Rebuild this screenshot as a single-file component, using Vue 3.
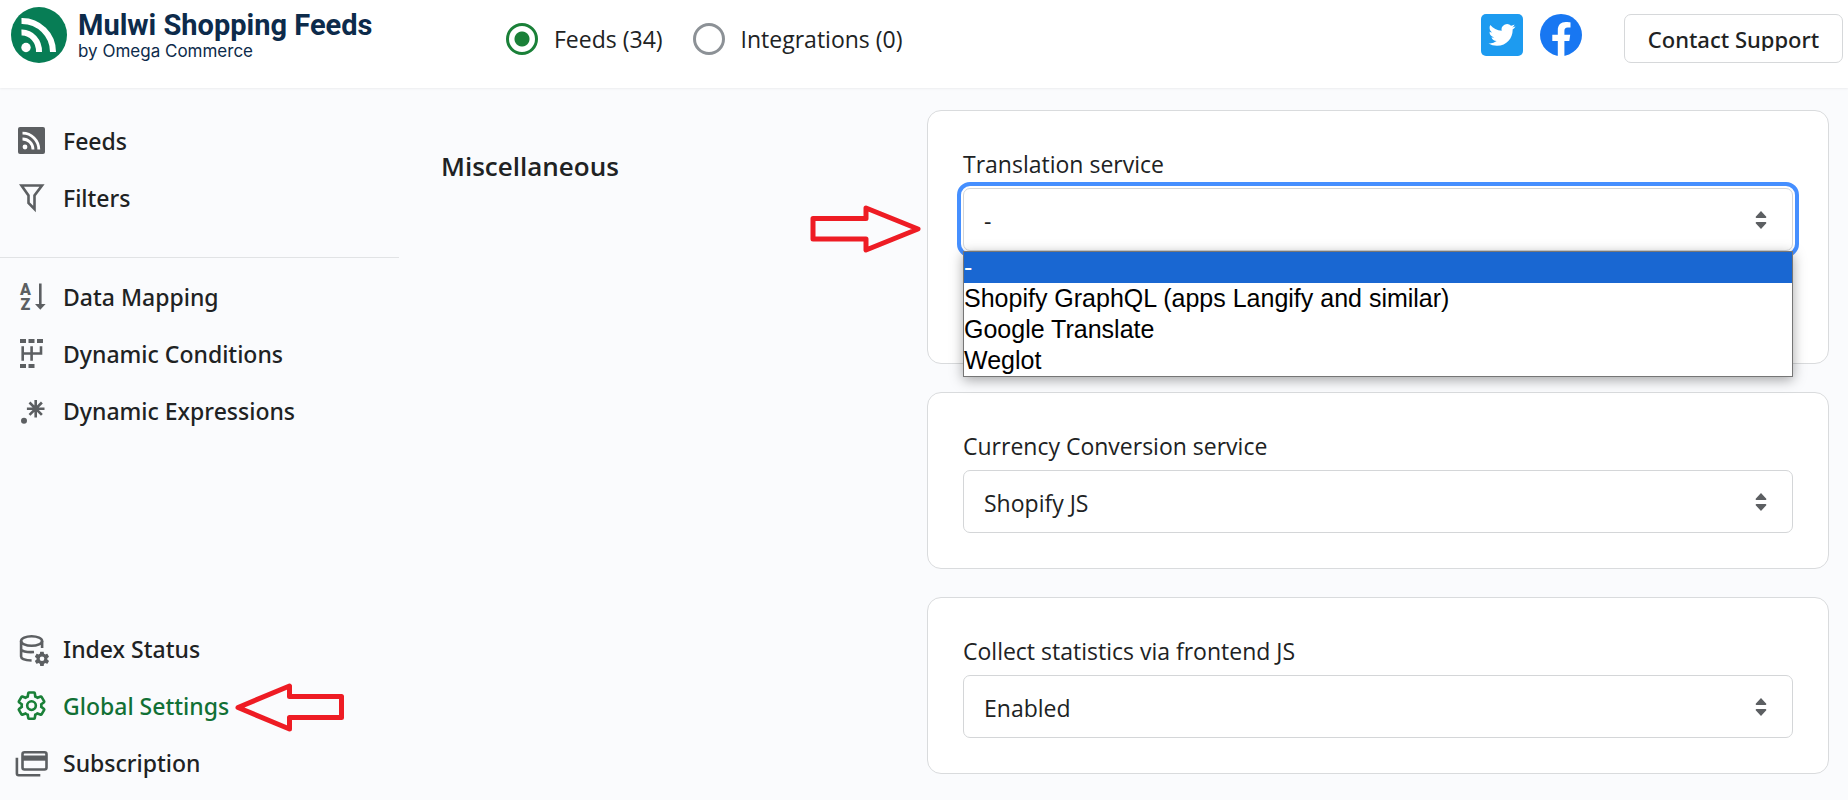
<!--
  App.vue - feed settings page
  Header with the brand and mode switch, sidebar navigation, settings cards
-->
<template>
  <div class="page">
    <!-- ========= header ========= -->
    <header class="header">
      <div class="brand">
        <svg class="brand-logo" viewBox="0 0 56 56" aria-hidden="true">
          <circle cx="28" cy="28" r="28" fill="#077d55" />
          <circle cx="15" cy="40.500" r="4.700" fill="#fff" />
          <path d="M10.500 25.500A17 19 0 0 1 28 45M10.500 14A31 31 0 0 1 42 45" fill="none" stroke="#fff" stroke-width="6" />
        </svg>
        <div class="brand-text">
          <div class="brand-title">Mulwi Shopping Feeds</div>
          <div class="brand-sub">by Omega Commerce</div>
        </div>
      </div>

      <div class="modes">
        <label v-for="m in modes" :key="m.value" class="mode">
          <input v-model="mode" type="radio" name="mode" :value="m.value" />
          <span>{{ m.label }}</span>
        </label>
      </div>

      <div class="actions">
        <a href="#" class="social" aria-label="Twitter">
          <svg viewBox="0 0 42 42">
            <rect width="42" height="42" rx="5" fill="#1d9bf0" />
            <path
              transform="translate(7.500 7.500) scale(1.120)"
              fill="#fff"
              d="M23.950 4.570a10 10 0 0 1-2.820.770 4.960 4.960 0 0 0 2.160-2.720c-.950.550-2 .950-3.130 1.180a4.920 4.920 0 0 0-8.380 4.480C7.690 8.090 4.070 6.130 1.640 3.160a4.820 4.820 0 0 0-.670 2.480c0 1.710.870 3.210 2.190 4.100a4.900 4.900 0 0 1-2.230-.620v.060a4.920 4.920 0 0 0 3.950 4.830 5 5 0 0 1-2.210.080 4.940 4.940 0 0 0 4.600 3.420A9.870 9.870 0 0 1 0 19.540a13.990 13.990 0 0 0 7.560 2.210c9.050 0 14-7.500 14-13.980 0-.210 0-.420-.020-.630a9.940 9.940 0 0 0 2.460-2.550z"
            />
          </svg>
        </a>
        <a href="#" class="social" aria-label="Facebook">
          <svg viewBox="0 0 42 42">
            <circle cx="21" cy="21" r="21" fill="#1877f2" />
            <path d="M17.800 42V27H12.300v-6.200h5.500v-4.600c0-5.300 3.200-8.200 8-8.200 2.300 0 4.700.400 4.700.400v5.200h-2.700c-2.600 0-3.400 1.600-3.400 3.300v3.900h5.800l-.900 6.200h-4.900v15z" fill="#fff" />
          </svg>
        </a>
        <button type="button" class="support"><span>Contact Support</span></button>
      </div>
    </header>

    <div class="layout">
      <!-- ========= sidebar ========= -->
      <nav class="sidebar">
        <div v-for="(group, gi) in navGroups" :key="gi" class="nav-group">
          <a
            v-for="item in group"
            :key="item.icon"
            href="#"
            class="nav-item"
            :class="{ active: item.icon === current }"
            @click.prevent="current = item.icon"
          >
            <svg class="nav-icon" viewBox="0 0 32 32" aria-hidden="true">
              <template v-if="item.icon === 'feeds'">
                <rect x="3" y="2" width="27" height="27" rx="2" fill="currentColor" />
                <circle cx="10" cy="22" r="2.400" fill="#fff" />
                <path d="M7.500 14A10.500 10.500 0 0 1 18 24.500M7.500 8.200A16.300 16.300 0 0 1 23.800 24.500" fill="none" stroke="#fff" stroke-width="2.800" />
              </template>
              <path v-else-if="item.icon === 'filters'" class="line" d="M6.500 3.500H27L19.500 13.500V27L13.500 21V13.500Z" />
              <template v-else-if="item.icon === 'mapping'">
                <text x="10.500" y="14" class="sort-letter">A</text>
                <text x="10.500" y="28.500" class="sort-letter">Z</text>
                <path class="line" d="M25.300 2.500V25" />
                <path d="M20 23H30.600L25.300 28.800Z" fill="currentColor" />
              </template>
              <template v-else-if="item.icon === 'conditions'">
                <path d="M5 1h6v4H5zM13.500 1h6v4h-6zM22 1h6v4h-6zM5 26h6v4H5zM13.500 26h6v4h-6z" fill="currentColor" />
                <path class="line" d="M7.700 8.300V22.700M16.600 8.300V22.700M26 8.300V15.500H7.700" />
              </template>
              <template v-else-if="item.icon === 'expressions'">
                <circle cx="9" cy="25.700" r="3" fill="currentColor" />
                <path class="line" d="M20.700 4.900V22.500M11.900 13.700H29.500M14.500 7.500L26.900 19.900M26.900 7.500L14.500 19.900" />
              </template>
              <template v-else-if="item.icon === 'index'">
                <ellipse class="line" cx="16.600" cy="8" rx="10.500" ry="4.800" />
                <path class="line" d="M6.100 8V23.500C6.100 25.800 10.500 27.300 16.600 27.500M6.100 16C6.100 18 11 19.500 19 19M27.100 8V15" />
                <path :d="gearPath" transform="translate(18.300 17.200) scale(0.720)" fill="currentColor" />
                <circle cx="27" cy="25.800" r="2.300" fill="#fafbfd" />
              </template>
              <g v-else-if="item.icon === 'settings'" transform="translate(0.800 -0.100) scale(1.310)" fill="none" stroke="currentColor" stroke-width="2">
                <path :d="gearPath" />
                <circle cx="12" cy="12" r="3.300" />
              </g>
              <template v-else>
                <rect class="line" x="7.500" y="5.200" width="24" height="17.300" rx="2" />
                <path d="M7.500 8.500h24v5.200h-24z" fill="currentColor" />
                <path class="line" d="M1.900 10.700V26.500Q1.900 28.200 3.600 28.200H25.300" />
              </template>
            </svg>
            <span>{{ item.label }}</span>
            <svg v-if="item.icon === 'settings'" class="pointer pointer-left" viewBox="0 0 114 58" aria-hidden="true">
              <path d="M6 28.500L57.500 7V17.500H109.500V38.500H57.500V50Z" />
            </svg>
          </a>
        </div>
      </nav>

      <!-- ========= settings ========= -->
      <main class="content">
        <h2 class="section-title">Miscellaneous</h2>

        <div class="cards">
          <svg class="pointer pointer-right" viewBox="0 0 116 58" aria-hidden="true">
            <path d="M5 18.500H58V8L110 29L58 50V39H5Z" />
          </svg>

          <section v-for="field in fields" :key="field.id" class="card" :class="{ tall: field.open }">
            <label class="field-label" :for="field.id">{{ field.label }}</label>
            <div class="select-wrap">
              <select :id="field.id" v-model="field.value" class="select" :class="{ focused: field.open }">
                <option v-for="o in field.options" :key="o" :value="o">{{ o }}</option>
              </select>
              <svg class="caret" viewBox="0 0 12 18" aria-hidden="true">
                <path d="M6 0L11.300 5.800Q11.500 7 10.500 7H1.500Q.500 7 .700 5.800ZM6 18L11.300 12.200Q11.500 11 10.500 11H1.500Q.500 11 .700 12.200Z" />
              </svg>
              <ul v-if="field.open" class="options" role="listbox" :aria-label="field.label">
                <li
                  v-for="o in field.options"
                  :key="o"
                  role="option"
                  :aria-selected="o === field.value"
                  @click="pick(field, o)"
                >{{ o }}</li>
              </ul>
            </div>
          </section>
        </div>
      </main>
    </div>
  </div>
</template>

<script setup>
import { ref } from 'vue'

const mode = ref('feeds')
const modes = [
  { value: 'feeds', label: 'Feeds (34)' },
  { value: 'integrations', label: 'Integrations (0)' }
]

const current = ref('settings')
const navGroups = [
  [
    { icon: 'feeds', label: 'Feeds' },
    { icon: 'filters', label: 'Filters' }
  ],
  [
    { icon: 'mapping', label: 'Data Mapping' },
    { icon: 'conditions', label: 'Dynamic Conditions' },
    { icon: 'expressions', label: 'Dynamic Expressions' }
  ],
  [
    { icon: 'index', label: 'Index Status' },
    { icon: 'settings', label: 'Global Settings' },
    { icon: 'subscription', label: 'Subscription' }
  ]
]

const fields = ref([
  {
    id: 'translation',
    label: 'Translation service',
    value: '-',
    options: ['-', 'Shopify GraphQL (apps Langify and similar)', 'Google Translate', 'Weglot'],
    open: true
  },
  { id: 'currency', label: 'Currency Conversion service', value: 'Shopify JS', options: ['Shopify JS'], open: false },
  { id: 'statistics', label: 'Collect statistics via frontend JS', value: 'Enabled', options: ['Enabled'], open: false }
])

function pick(field, option) {
  field.value = option
  field.open = false
}

// gear outline on a 24x24 grid, shared by two icons
const gearPath =
  'M19.430 12.980c.040-.320.070-.640.070-.980 0-.340-.030-.660-.070-.980l2.110-1.650c.190-.150.240-.420.120-.640l-2-3.460c-.090-.160-.260-.250-.440-.250-.060 0-.120.010-.170.030l-2.490 1c-.520-.400-1.080-.730-1.690-.980l-.380-2.650C14.460 2.180 14.250 2 14 2h-4c-.250 0-.460.180-.490.420l-.380 2.650c-.610.250-1.170.590-1.690.980l-2.490-1c-.060-.020-.120-.030-.180-.030-.170 0-.340.090-.430.250l-2 3.460c-.130.220-.070.490.120.640l2.110 1.650c-.040.320-.070.650-.070.980 0 .330.030.660.070.980l-2.110 1.650c-.190.150-.240.420-.120.640l2 3.460c.090.160.260.250.440.250.060 0 .120-.010.170-.030l2.490-1c.520.400 1.080.730 1.690.980l.380 2.650c.030.240.240.420.490.420h4c.250 0 .460-.180.490-.420l.380-2.650c.610-.250 1.170-.590 1.690-.980l2.490 1c.060.020.120.030.180.030.170 0 .340-.090.430-.250l2-3.460c.120-.220.070-.490-.120-.640l-2.110-1.650z'
</script>

<style>
body {
  margin: 0;
  background: #fafbfd;
}
</style>

<style scoped>
.page {
  display: flex;
  flex-direction: column;
  min-height: 100vh;
  font-family: "Open Sans", "Noto Sans", sans-serif;
  font-size: 23px;
  color: #202223;
}

/* header */
.header {
  display: flex;
  align-items: flex-start;
  box-sizing: border-box;
  height: 88px;
  padding: 7px 5px 0 11px;
  background: #fff;
  box-shadow: 0 1px 2px rgba(0, 0, 0, 0.06);
}
.brand {
  display: flex;
  gap: 11px;
  flex: 0 0 495px;
}
.brand-logo {
  width: 56px;
  height: 56px;
}
.brand-text {
  color: #0d2b4b;
}
.brand-title {
  font: bold 29px/36px Roboto, sans-serif;
}
.brand-sub {
  font: 17px/16px Inter, sans-serif;
}
.modes {
  display: flex;
  gap: 30px;
  padding-top: 16px;
}
.mode {
  display: flex;
  align-items: center;
  gap: 16px;
  line-height: 32px;
  white-space: nowrap;
}
.mode input {
  appearance: none;
  box-sizing: border-box;
  width: 32px;
  height: 32px;
  margin: 0;
  border: 3px solid #8c9196;
  border-radius: 50%;
  background: #fff;
}
.mode input:checked {
  border-color: #1a8038;
  background: radial-gradient(circle, #1a8038 7px, #fff 8px);
}
.actions {
  display: flex;
  margin-left: auto;
  padding-top: 7px;
}
.social {
  width: 42px;
  height: 42px;
  margin-right: 17px;
}
.social svg {
  display: block;
}
.support {
  width: 219px;
  height: 49px;
  margin-left: 25px;
  padding: 0;
  border: 1px solid #d6d8da;
  border-radius: 7px;
  background: #fff;
  color: #202223;
  font: 500 22px "Noto Sans", sans-serif;
}
/* the label box is one line high and cuts the descenders */
.support span {
  display: block;
  height: 24px;
  line-height: 24px;
  overflow: hidden;
}

/* sidebar */
.layout {
  display: flex;
  flex: 1;
}
.sidebar {
  display: flex;
  flex-direction: column;
  flex: 0 0 399px;
  box-sizing: border-box;
  padding: 24px 0 9px;
}
.nav-group:nth-child(2) {
  margin-top: 31px;
  padding-top: 10px;
  border-top: 1px solid #e1e3e5;
}
.nav-group:last-child {
  margin-top: auto;
}
.nav-item {
  position: relative;
  display: flex;
  align-items: center;
  gap: 16px;
  height: 57px;
  padding-left: 15px;
  color: #202223;
  font-family: "Noto Sans", sans-serif;
  font-weight: 500;
  text-decoration: none;
}
.nav-item.active {
  color: #117035;
}
.nav-icon {
  width: 32px;
  height: 32px;
  overflow: visible;
  color: #5c5f62;
}
.active .nav-icon {
  color: #1a8038;
}
.line {
  fill: none;
  stroke: currentColor;
  stroke-width: 2.6;
}
.sort-letter {
  font: 900 16px Roboto, sans-serif;
  text-anchor: middle;
  fill: currentColor;
}

/* red callout arrows */
.pointer {
  position: absolute;
  height: 58px;
}
.pointer path {
  fill: none;
  stroke: #ee1c24;
  stroke-width: 5;
  stroke-linejoin: round;
}
.pointer-left {
  left: 232px;
  top: 2px;
  width: 114px;
}
.pointer-right {
  left: -119px;
  top: 90px;
  width: 116px;
}

/* settings */
.content {
  display: grid;
  grid-template-columns: minmax(0, 486px) minmax(0, 1fr);
  flex: 1;
  padding: 22px 19px 26px 42px;
}
.section-title {
  margin: 38px 0 0;
  font-size: 26px;
  line-height: 36px;
  font-weight: 600;
}
.cards {
  position: relative;
  display: flex;
  flex-direction: column;
  gap: 28px;
}
.card {
  display: flex;
  flex-direction: column;
  gap: 6px;
  box-sizing: border-box;
  padding: 35px;
  border: 1px solid #d9dbdd;
  border-radius: 14px;
  background: #fff;
}
.card.tall {
  min-height: 254px;
}
.field-label {
  line-height: 36px;
}
.select-wrap {
  position: relative;
}
.select {
  appearance: none;
  display: block;
  box-sizing: border-box;
  width: 100%;
  height: 63px;
  padding: 2px 60px 0 20px;
  border: 1px solid #d4d6d8;
  border-radius: 7px;
  background: #fff;
  color: #202223;
  font: inherit;
}
.select.focused {
  outline: 4px solid #458fff;
  outline-offset: 2px;
}
.caret {
  position: absolute;
  right: 26px;
  top: 23px;
  width: 12px;
  height: 18px;
  fill: #5c5f62;
  pointer-events: none;
}
.options {
  position: absolute;
  z-index: 1;
  top: 100%;
  left: 0;
  right: 0;
  margin: 0;
  padding: 0;
  border: 1px solid #767676;
  background: #fff;
  box-shadow: 0 3px 12px rgba(0, 0, 0, 0.35);
  color: #000;
  font: 25px/31px "Liberation Sans", Arial, sans-serif;
  list-style: none;
}
.options li[aria-selected="true"] {
  background: #1967d2;
  color: #fff;
}
</style>
